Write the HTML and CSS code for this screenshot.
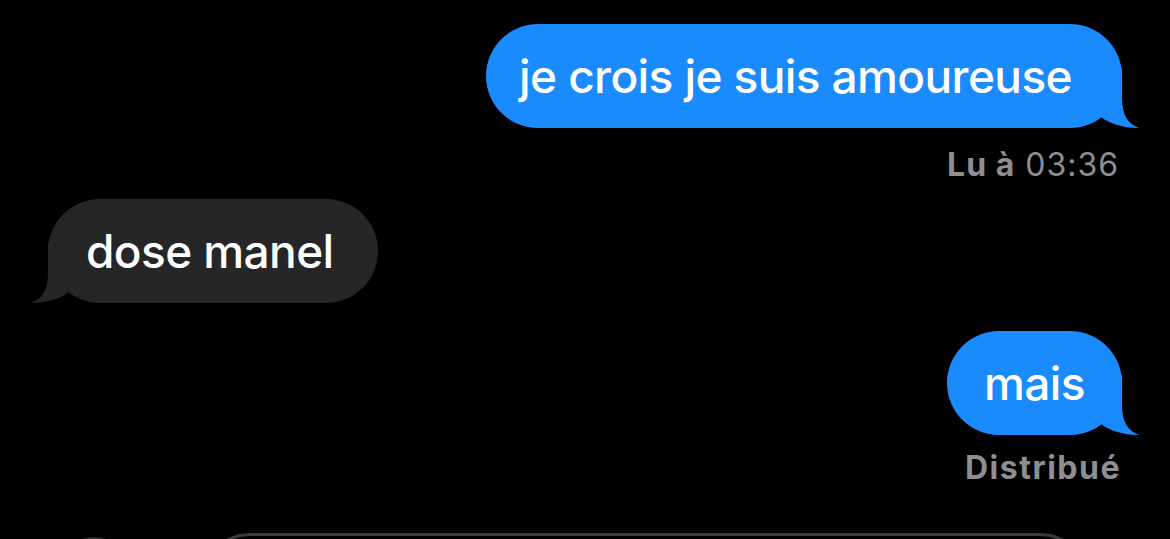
FILE: index.html
```html
<!DOCTYPE html>
<html lang="fr">
<head>
<meta charset="utf-8">
<title>Messages</title>
<link rel="stylesheet" href="styles.css">
</head>
<body>
<main class="chat">
  <div class="row sent">
    <div class="bubble blue first">je crois je suis amoureuse
      <svg class="tail" viewBox="-30 -60 50 60" width="50" height="60"><path d="M-30,-60 L0,-60 L0,-30 C0,-13 6,-4 17,0 C4,0.5 -12,-4 -21,-11 L-30,-11 Z"/></svg>
    </div>
  </div>
  <div class="receipt read"><b>Lu à</b> 03:36</div>
  <div class="row received">
    <div class="bubble gray second">dose manel
      <svg class="tail" viewBox="-30 -60 50 60" width="50" height="60"><path d="M-30,-60 L0,-60 L0,-30 C0,-13 6,-4 17,0 C4,0.5 -12,-4 -21,-11 L-30,-11 Z"/></svg>
    </div>
  </div>
  <div class="row sent gap">
    <div class="bubble blue">mais
      <svg class="tail" viewBox="-30 -60 50 60" width="50" height="60"><path d="M-30,-60 L0,-60 L0,-30 C0,-13 6,-4 17,0 C4,0.5 -12,-4 -21,-11 L-30,-11 Z"/></svg>
    </div>
  </div>
  <div class="receipt delivered"><b>Distribué</b></div>
  <div class="composer">
    <div class="plus"></div>
    <div class="field"></div>
  </div>
</main>
</body>
</html>
```
FILE: styles.css
```css
html, body {
  margin: 0;
  padding: 0;
  background: #000;
  height: 100%;
  overflow: hidden;
}
.chat {
  display: flex;
  flex-direction: column;
  padding-top: 24px;
  font-family: Inter, "Noto Sans", sans-serif;
}
.row {
  display: flex;
}
.row.sent {
  justify-content: flex-end;
  padding-right: 48px;
}
.row.received {
  justify-content: flex-start;
  padding-left: 48px;
  margin-top: 15px;
}
.row.gap {
  margin-top: 28px;
}
.bubble {
  position: relative;
  height: 104px;
  box-sizing: border-box;
  padding: 0 37px;
  border-radius: 52px;
  display: flex;
  align-items: center;
  font-size: 46px;
  font-weight: 500;
  letter-spacing: -0.6px;
  color: #fff;
  white-space: nowrap;
}
.bubble.first {
  padding: 0 50px 0 33px;
}
.bubble.second {
  padding: 0 44px 0 38px;
}
.bubble.blue {
  background: #1a8aff;
}
.bubble.gray {
  background: #262628;
}
.tail {
  position: absolute;
  bottom: 0;
  right: -20px;
  overflow: visible;
}
.blue .tail path { fill: #1a8aff; }
.gray .tail path { fill: #262628; }
.gray .tail {
  right: auto;
  left: -20px;
  transform: scaleX(-1);
}
.receipt {
  align-self: flex-end;
  padding-right: 51px;
  color: #8e8e93;
  font-size: 32px;
  line-height: 38px;
  margin-top: 18px;
  letter-spacing: 1px;
}
.receipt b {
  font-weight: 700;
}
.receipt.delivered {
  margin-top: 14px;
  letter-spacing: 1.5px;
  padding-right: 49px;
}
.composer {
  display: flex;
  align-items: flex-start;
  margin-top: 46px;
  padding-left: 56px;
}
.plus {
  width: 76px;
  height: 76px;
  border-radius: 50%;
  background: #2c2c2e;
  margin-top: 4px;
}
.field {
  margin-left: 68px;
  width: 890px;
  height: 100px;
  box-sizing: border-box;
  border: 3px solid #3a3a3c;
  border-radius: 50px;
}
```
